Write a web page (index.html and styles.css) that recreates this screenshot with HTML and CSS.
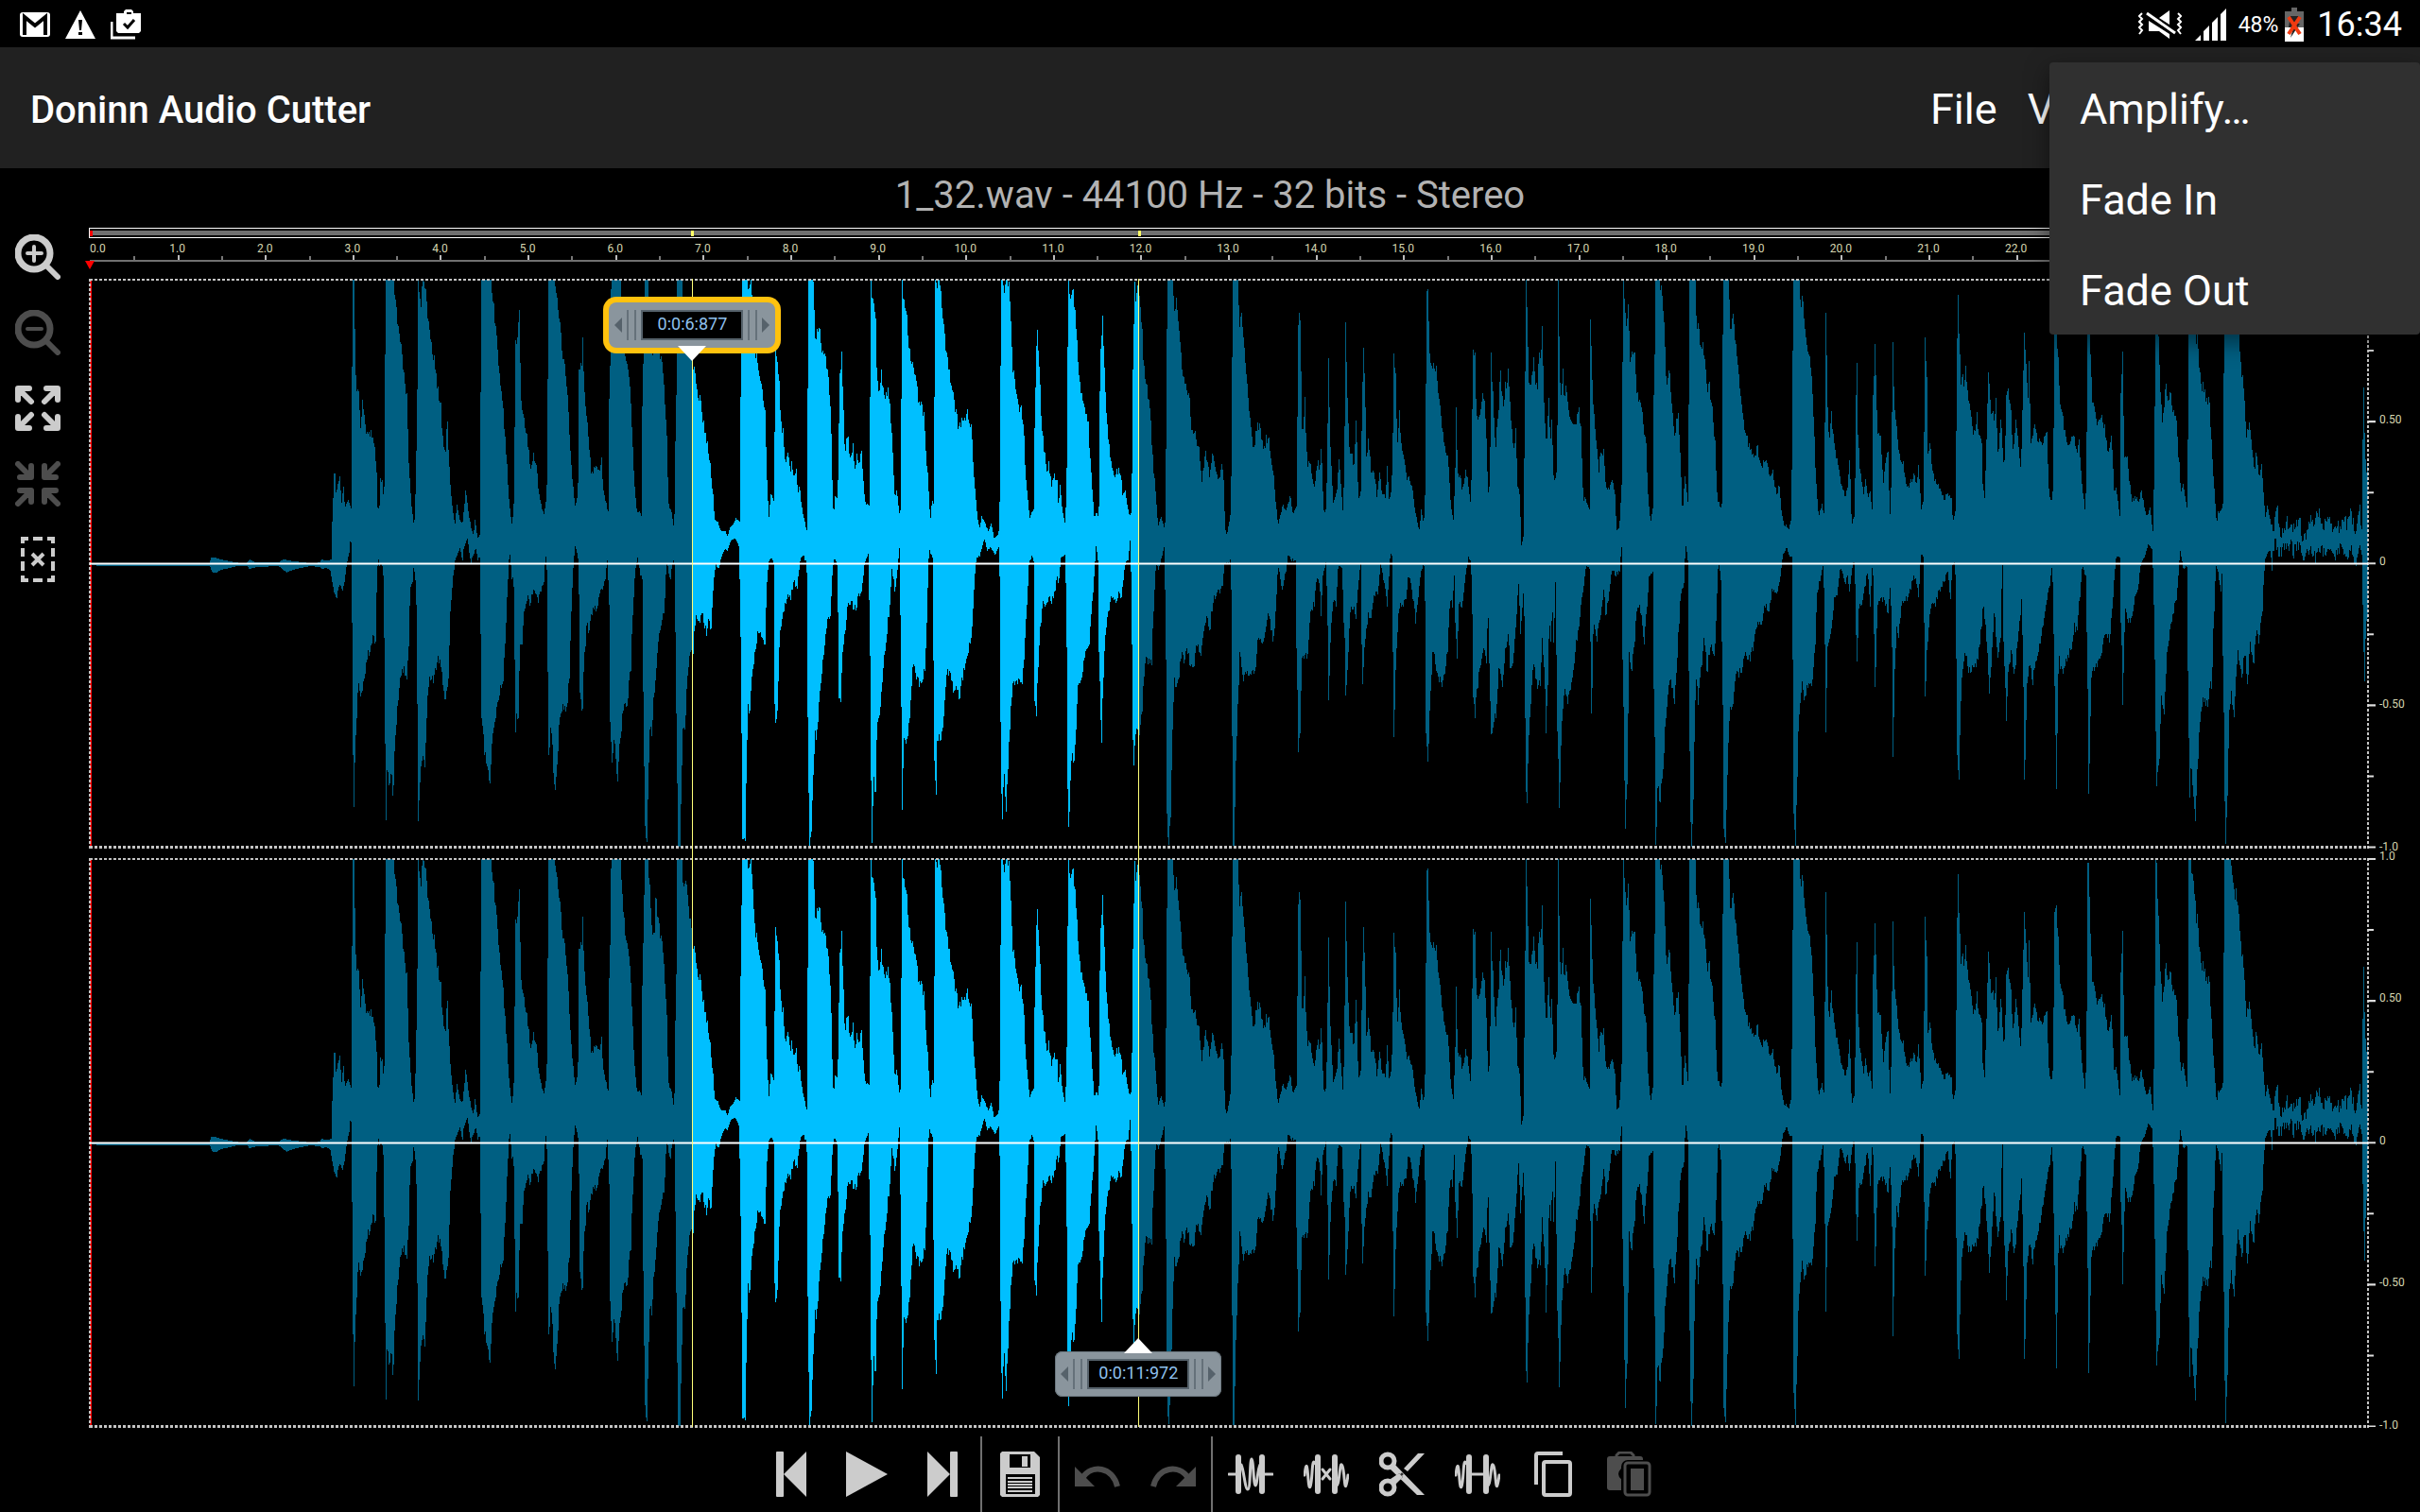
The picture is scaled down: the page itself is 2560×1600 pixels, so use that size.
FILE: index.html
```
<!DOCTYPE html>
<html lang="en">
<head>
    <meta charset="UTF-8">
    <meta name="viewport" content="width=device-width, initial-scale=1.0">
    <title>Doninn Audio Cutter</title>
    <link rel="stylesheet" href="styles.css">
</head>
<body>

    <!-- Status Bar -->
    <div class="status-bar">
        <div class="status-left">
            <svg width="32" height="32" viewBox="0 0 32 32"><rect y="3" width="32" height="26" rx="3" fill="#fff"/><path d="M5 27V8l11 9 11-9v19" fill="none" stroke="#000" stroke-width="4"/></svg>
            <svg width="32" height="32" viewBox="0 0 32 32"><path d="M16 1l16 30H0z" fill="#fff"/><path d="M14 11h4l-1 11h-2zM14 24h4v3h-4z" fill="#000"/></svg>
            <svg width="32" height="32" viewBox="0 0 32 32"><path d="M6 4h8V2l2-2h6l2 2v2h8v19l-2 2H8l-2-2z" fill="#fff"/><path d="M17 3h5v2h-5z" fill="#000"/><path d="M14 15l4 4 7-8" fill="none" stroke="#000" stroke-width="3"/><path d="M1 13v17h25" fill="none" stroke="#fff" stroke-width="3"/></svg>
        </div>
        <div class="status-right">
            <svg width="46" height="32" viewBox="0 0 46 32"><path d="M4 4L1 7l3 3-3 3 3 3-3 3 3 3-3 4M42 4l3 3-3 3 3 3-3 3 3 3-3 3 3 4" fill="none" stroke="#fff" stroke-width="2"/><path d="M33 1v15L22 9zM11 12l22 14v5l-11-8H11z" fill="#fff"/><path d="M9 4l30 21" stroke="#fff" stroke-width="3"/></svg>
            <svg class="signal" width="34" height="34" viewBox="0 0 34 34"><path d="M0 34l6-6v6zM9 34V24l6-6v16zM18 34V15l6-6v25zM27 34V6l6-6v34z" fill="#fff"/></svg>
            <span class="percent">48%</span>
            <svg class="battery" width="20" height="36" viewBox="0 0 20 36"><path d="M7 0h6v4h7v17H0V4h7z" fill="#666"/><path d="M0 21h20v15H0z" fill="#fff"/><path d="M6 9h9l-3 8h4L6 32l3-11H4z" fill="#222"/><path d="M4 10l12 18M16 10L4 28" stroke="#f03a10" stroke-width="4"/></svg>
            <span class="clock">16:34</span>
        </div>
    </div>

    <!-- App Bar -->
    <header class="app-bar">
        <h1>Doninn Audio Cutter</h1>
        <nav class="menu-bar">
            <button>File</button>
            <button>View</button>
        </nav>
        <div class="popup-menu">
            <button>Amplify…</button>
            <button>Fade In</button>
            <button>Fade Out</button>
        </div>
    </header>

    <p class="file-info">1_32.wav - 44100 Hz - 32 bits - Stereo</p>

    <main class="editor">
        <!-- Zoom Tools -->
        <div class="side-bar">
            <button class="tool" aria-label="Zoom in"><svg viewBox="0 0 48 48"><circle cx="20" cy="20" r="17" stroke-width="7"/><path d="M32 32l13 13" stroke-width="6"/><path d="M13 20h15M20 13v15" stroke-width="4"/></svg></button>
            <button class="tool" aria-label="Zoom out" disabled><svg viewBox="0 0 48 48"><circle cx="20" cy="20" r="17" stroke-width="7"/><path d="M32 32l13 13" stroke-width="6"/><path d="M13 20h15" stroke-width="4"/></svg></button>
            <button class="tool" aria-label="Expand"><svg viewBox="0 0 48 48"><path d="M15 3H3v12M4 4l13 13M33 3h12v12M44 4L31 17M15 45H3V33M4 44l13-13M33 45h12V33M44 44L31 31" stroke-width="6"/></svg></button>
            <button class="tool" aria-label="Collapse" disabled><svg viewBox="0 0 48 48"><path d="M17 5v12H5M16 16L3 3M31 5v12h12M32 16L45 3M17 43V31H5M16 32L3 45M31 43V31h12M32 32l13 13" stroke-width="6"/></svg></button>
            <button class="tool" aria-label="Clear selection"><svg class="square-caps" viewBox="0 0 48 48"><path d="M8 7V2h6M19 2h10M34 2h6v5M8 12v9M8 26v10M40 12v9M40 26v10M8 41v5h6M19 46h10M34 46h6v-5" stroke-width="4"/><path d="M18 18l12 12M30 18L18 30" stroke-width="4"/></svg></button>
        </div>

        <!-- Waveform -->
        <div class="wave-area">
            <div class="overview">
                <div class="overview-fill"></div>
                <i class="mark mark-red"></i>
                <i class="mark" style="left: 26.4%"></i>
                <i class="mark" style="left: 46%"></i>
            </div>
            <div class="ruler" id="ruler"><i class="playhead"></i></div>

            <svg class="defs" width="0" height="0">
                <defs>
                    <linearGradient id="levels" gradientUnits="userSpaceOnUse" x1="0" y1="0" x2="2410" y2="0">
                        <stop offset="0.2645" stop-color="#005f82"/>
                        <stop offset="0.2645" stop-color="#00bfff"/>
                        <stop offset="0.4603" stop-color="#00bfff"/>
                        <stop offset="0.4603" stop-color="#005f82"/>
                    </linearGradient>
                    <path id="wave" shape-rendering="crispEdges"/>
                    <g id="frame" fill="none" stroke="#c4c4c4" stroke-width="2" shape-rendering="crispEdges">
                        <path d="M1 0V602" stroke="#f00"/>
                        <path d="M0 1H2410M0 601H2410M0 0V602M2410 0V602" stroke-dasharray="3 2"/>
                        <path d="M0 301H2410" stroke="#fff" stroke-opacity="0.5" stroke-width="3"/>
                        <path d="M0 301H2410" stroke="#fff" stroke-width="1"/>
                    </g>
                    <path id="ticks" d="M0 1h8M0 76h6M0 151h8M0 226h6M0 301h8M0 376h6M0 451h8M0 526h6M0 601h8" stroke="#ddd" stroke-width="2"/>
                </defs>
            </svg>

            <div class="tracks">
                <div class="track">
                    <svg class="plot" viewBox="0 0 2410 602" preserveAspectRatio="none"><use href="#wave" fill="url(#levels)"/><use href="#frame"/></svg>
                    <svg class="ticks" viewBox="0 0 8 602" preserveAspectRatio="none"><use href="#ticks"/></svg>
                    <div class="scale"><span>1.0</span><span>0.50</span><span>0</span><span>-0.50</span><span>-1.0</span></div>
                </div>
                <div class="track">
                    <svg class="plot" viewBox="0 0 2410 602" preserveAspectRatio="none"><use href="#wave" fill="url(#levels)"/><use href="#frame"/></svg>
                    <svg class="ticks" viewBox="0 0 8 602" preserveAspectRatio="none"><use href="#ticks"/></svg>
                    <div class="scale"><span>1.0</span><span>0.50</span><span>0</span><span>-0.50</span><span>-1.0</span></div>
                </div>

                <!-- Selection Handles -->
                <div class="overlay">
                    <div class="cursor" style="left: 26.45%">
                        <button class="handle handle-start active"><i class="arrow-left"></i><i class="grip"></i><span>0:0:6:877</span><i class="grip"></i><i class="arrow-right"></i></button>
                    </div>
                    <div class="cursor" style="left: 46.03%">
                        <button class="handle handle-end"><i class="arrow-left"></i><i class="grip"></i><span>0:0:11:972</span><i class="grip"></i><i class="arrow-right"></i></button>
                    </div>
                </div>
            </div>
        </div>
    </main>

    <!-- Bottom Toolbar -->
    <footer class="toolbar">
        <button class="tool" aria-label="To start"><svg class="solid" viewBox="0 0 48 48"><rect x="8" width="8" height="48" rx="1"/><path d="M40 0v48L16 24z"/></svg></button>
        <button class="tool" aria-label="Play"><svg class="solid" viewBox="0 0 48 48"><path d="M2 0l44 24L2 48z"/></svg></button>
        <button class="tool" aria-label="To end"><svg class="solid" viewBox="0 0 48 48"><rect x="32" width="8" height="48" rx="1"/><path d="M8 0v48l24-24z"/></svg></button>
        <div class="divider"></div>
        <button class="tool" aria-label="Save"><svg class="solid" viewBox="0 0 48 48"><path d="M5 0h34l6 6v40l-2 2H5l-2-2V2z"/><path d="M13 3h22v14H13zM9 24h31v21H9z" fill="#000"/><path d="M26 5h6v11h-6zM11 27h26v2H11zM11 31h26v2H11zM11 34h26v2H11zM11 37h26v2H11zM11 41h26v2H11z"/></svg></button>
        <div class="divider"></div>
        <button class="tool" aria-label="Undo" disabled><svg class="square-caps" viewBox="0 0 48 48"><path d="M8 28C18 13 40 16 45 37" stroke-width="6"/><path class="solid" d="M0 16v21h21z"/></svg></button>
        <button class="tool" aria-label="Redo" disabled><svg class="square-caps" viewBox="0 0 48 48"><path d="M40 28C30 13 8 16 3 37" stroke-width="6"/><path class="solid" d="M48 16v21H27z"/></svg></button>
        <div class="divider"></div>
        <button class="tool" aria-label="Trim"><svg viewBox="0 0 48 48"><path d="M11 6v36M36 6v36" stroke-width="6"/><path d="M1 24h8M38 24h9" stroke-width="3"/><path d="M14 14C17 20 18 40 21 40S23 8 25 8s2 28 4 28 2-16 5-22" stroke-width="3"/></svg></button>
        <button class="tool" aria-label="Delete selection"><svg viewBox="0 0 48 48"><path d="M15 6v36M33 6v36" stroke-width="6"/><path d="M1 25C3 8 4 16 5 30S8 38 9 22 11 12 13 13M47 25C45 40 44 40 43 28S40 10 39 16 37 36 35 36" stroke-width="3"/><path d="M20 19l8 10M28 19l-8 10" stroke-width="3"/></svg></button>
        <button class="tool" aria-label="Cut"><svg class="square-caps" viewBox="0 0 48 48"><circle cx="9" cy="10" r="7" stroke-width="5"/><circle cx="9" cy="38" r="7" stroke-width="5"/><path class="solid" d="M15 12l33 34h-8L12 19zM14 36l11-9-4-4-9 8zM26 18L41 2h7L30 21z"/><path class="solid" d="M12 29l9-6 4 4-9 9z"/><circle cx="24" cy="24" r="1" stroke="#000"/></svg></button>
        <button class="tool" aria-label="Silence"><svg viewBox="0 0 48 48"><path d="M15 6v36M33 6v36" stroke-width="6"/><path d="M1 25C3 8 4 16 5 30S8 38 9 22 11 12 13 13M47 25C45 40 44 40 43 28S40 10 39 16 37 36 35 36M17 24h14" stroke-width="3"/></svg></button>
        <button class="tool" aria-label="Copy"><svg class="square-caps" viewBox="0 0 48 48"><path d="M6 35V4q0-2 2-2h26" stroke-width="4"/><rect x="14" y="11" width="28" height="35" rx="2" stroke-width="4"/></svg></button>
        <button class="tool" aria-label="Paste" disabled><svg class="square-caps" viewBox="0 0 48 48"><path d="M11 7V4l3-3h12l3 3v3" stroke-width="3"/><rect class="solid" x="1" y="5" width="38" height="36" rx="3"/><rect x="19" y="12" width="27" height="36" rx="4" stroke="#000" stroke-width="6"/><path d="M17 19q-5 5 0 9" stroke="#000" stroke-width="3"/><rect x="20" y="12" width="26" height="34" rx="3" stroke-width="3" fill="#000"/><rect class="solid" x="26" y="18" width="14" height="23"/></svg></button>
    </footer>

    <script src="wave.js"></script>
</body>
</html>
```

FILE: styles.css
```
/* Global Styles */
* {
    margin: 0;
    padding: 0;
    box-sizing: border-box;
}

body {
    background: #000;
    color: #fff;
    font-family: Roboto, sans-serif;
    min-height: 100vh;
    display: flex;
    flex-direction: column;
    overflow: hidden;
}

button {
    background: none;
    border: none;
    color: inherit;
    font: inherit;
    cursor: pointer;
}

/* Status Bar */
.status-bar {
    height: 50px;
    padding: 2px 19px 0 21px;
    display: flex;
    justify-content: space-between;
    align-items: center;
}

.status-left,
.status-right {
    display: flex;
    align-items: center;
}

.status-left {
    gap: 16px;
}

.signal {
    margin: 0 12px 0 14px;
}

.percent {
    font-size: 23px;
    margin-right: 7px;
}

.battery {
    margin-right: 14px;
}

.clock {
    font-size: 36px;
    line-height: 48px;
}

/* App Bar */
.app-bar {
    position: relative;
    height: 128px;
    padding: 4px 0 0 32px;
    background: #212121;
    display: flex;
    justify-content: space-between;
    align-items: center;
}

.app-bar h1 {
    font-size: 40px;
    font-weight: 500;
}

.menu-bar {
    display: flex;
    width: 534px;
    font-size: 45px;
}

.menu-bar button {
    padding: 0 16px 2px;
}

.popup-menu {
    position: absolute;
    top: 16px;
    right: 0;
    z-index: 10;
    width: 392px;
    background: #303030;
    border-radius: 4px;
    box-shadow: 0 8px 24px rgba(0, 0, 0, 0.5);
    font-size: 45px;
}

.popup-menu button {
    display: block;
    width: 100%;
    height: 96px;
    padding: 2px 0 0 32px;
    text-align: left;
}

/* File Info */
.file-info {
    height: 54px;
    line-height: 58px;
    font-size: 40px;
    text-align: center;
    color: #b2b2b2;
}

/* Editor */
.editor {
    flex: 1;
    display: flex;
}

.side-bar {
    width: 80px;
    margin-right: 14px;
}

/* Icon Buttons */
.tool {
    display: flex;
    justify-content: center;
    align-items: center;
    width: 80px;
    height: 80px;
    color: #ccc;
}

.tool:disabled {
    color: #4d4d4d;
}

.tool svg {
    width: 48px;
    height: 48px;
    fill: none;
    stroke: currentColor;
    stroke-linecap: round;
    stroke-linejoin: round;
}

.tool .square-caps {
    stroke-linecap: butt;
    stroke-linejoin: miter;
}

.tool .solid {
    fill: currentColor;
    stroke: none;
}

/* Waveform */
.wave-area {
    flex: 1;
    display: flex;
    flex-direction: column;
    padding-top: 9px;
}

.overview {
    position: relative;
    height: 11px;
    margin-right: 55px;
    padding: 2px 0;
    border: 1px solid #fff;
    border-right: none;
}

.overview-fill {
    height: 100%;
    background: #707070;
}

.mark {
    position: absolute;
    top: 2px;
    width: 3px;
    height: 6px;
    background: #ffff66;
}

.mark-red {
    left: 0;
    background: #f00;
}

.ruler {
    position: relative;
    height: 25px;
    margin: 0 55px 0 1px;
    border-bottom: 2px solid #707070;
    font-size: 12px;
    line-height: 22px;
    color: #d6d6b0;
}

.ruler span {
    position: absolute;
    transform: translateX(-50%);
}

.ruler .origin {
    transform: none;
}

.ruler .tick {
    position: absolute;
    bottom: 0;
    width: 2px;
    height: 4px;
    background: #777;
}

.ruler .major {
    height: 5px;
    background: #bbb;
}

.playhead {
    position: absolute;
    top: 24px;
    left: -5px;
    border: 5px solid transparent;
    border-top: 9px solid #f00;
    border-bottom: none;
}

.defs {
    position: absolute;
}

.tracks {
    position: relative;
    flex: 1;
    display: flex;
    flex-direction: column;
    gap: 10px;
    padding: 18px 0 10px 1px;
}

.track {
    flex: 1;
    min-height: 0;
    display: flex;
}

.plot {
    flex: 1;
    width: 0;
    height: 100%;
    overflow: visible;
}

.ticks {
    width: 8px;
    height: 100%;
}

.scale {
    width: 47px;
    margin: -8px 0 -4px;
    padding-left: 4px;
    display: flex;
    flex-direction: column;
    justify-content: space-between;
    font-size: 12px;
    line-height: 12px;
    color: #d6d6b0;
}

/* Selection Handles */
.overlay {
    position: absolute;
    top: 18px;
    bottom: 10px;
    left: 1px;
    right: 55px;
}

.cursor {
    position: absolute;
    top: 0;
    bottom: 0;
    width: 1px;
    background: #ffff78;
}

.handle {
    position: absolute;
    left: -88px;
    width: 176px;
    height: 48px;
    display: flex;
    justify-content: space-between;
    align-items: center;
    padding: 0 6px;
    background: #8a959d;
    border-radius: 8px;
    box-shadow: inset 0 0 0 1px #6d7981;
}

.handle-start {
    top: 25px;
}

.handle-end {
    bottom: 32px;
}

.handle.active {
    box-shadow: 0 0 0 6px #ffc20e;
}

.handle span {
    width: 108px;
    height: 32px;
    background: #000;
    border: 2px solid #56626b;
    font-size: 18px;
    line-height: 25px;
    color: #8fc1ee;
}

.handle::after {
    content: "";
    position: absolute;
    left: 73px;
    border: 15px solid transparent;
}

.handle-start::after {
    top: 46px;
    border-top: 16px solid #fff;
    border-bottom: none;
}

.handle-end::after {
    bottom: 46px;
    border-bottom: 16px solid #fff;
    border-top: none;
}

.grip {
    width: 10px;
    height: 32px;
    border: solid #65717a;
    border-width: 0 2px;
}

.arrow-left,
.arrow-right {
    border: 8px solid transparent;
}

.arrow-left {
    border-left: none;
    border-right-color: #56626b;
}

.arrow-right {
    border-right: none;
    border-left-color: #56626b;
}

/* Bottom Toolbar */
.toolbar {
    display: flex;
    justify-content: center;
    height: 80px;
}

.divider {
    width: 2px;
    background: #707070;
}
```

FILE: wave.js
```
// Each block: start position in px, units per px, then "x,level" pairs.
// Levels run from 15 (+1.0) over 788 (0) to 1560 (-1.0).
const upper = [
    [0, 1, "0,788 127,788 128,771 133,773 140,778 155,786 166,787 169,778 175,785 200,786 205,776 212,781 232,787 243,786"],
    [245, 2.119, "0,778 18,780 24,775 25,675 28,545 30,542 33,598 38,570 42,550 45,630 49,580 53,635 60,615 67,640 68,350 71,15 73,15 75,150 78,300 83,320 88,420 93,342 98,410 105,440 112,440 120,470 123,540 126,635 130,640 133,555 136,560 138,610 141,580 142,335 145,15 162,15 166,70 172,140 178,190 184,270 192,330 196,520 203,640 208,690 211,600 214,480 215,335 217,15 220,60 224,90 227,15 234,40 238,120 246,185 254,240 260,310 268,360 272,440 278,500 282,400 285,480 290,580 296,660 300,680 304,628 310,670 316,680 320,640 324,590 330,650 337,700 341,710 345,670 350,720 355,710 357,335 360,15 380,15 386,80 393,180 400,270 408,380 415,500 421,620 427,680 431,650 433,440 436,180 439,175 443,98 447,300 450,380 460,435 466,500 470,530 476,490 482,520 487,590 492,625 499,655 503,620 505,625 507,340 510,15 522,15 528,70 535,130 540,220 546,260 553,330 558,480 564,580 569,635 575,600 577,440 578,260 584,255 586,172 589,320 596,405 602,500 606,550 611,525 617,525 624,540 628,505 632,590 638,625 644,650 646,340 650,40 652,15 670,15 674,110 680,200 685,245 692,310 698,470 703,600 708,650 712,645 718,660 720,360 725,15 732,15 735,70 742,220 748,215 750,120 754,180 762,230 768,300 774,440 779,640 784,640 791,700 793,500 796,330 798,15 808,15 811,90 818,90 832,230 836,265 842,320 850,345 858,420 866,460 872,520 878,600 882,670 888,675 896,700 905,700 911,715 916,690 922,685 929,665 934,670 939,675 940,335 943,15 955,15 958,60 964,15 966,80 972,200 978,250 986,310 994,370 998,520 1003,670 1007,600 1012,610 1016,635 1017,430 1019,200 1022,290 1023,240 1027,290 1030,400 1036,440 1040,510 1046,490 1051,540 1055,510 1060,560 1064,530 1068,600 1072,580 1078,640 1086,690 1089,700 1090,335 1093,15 1100,15 1101,50 1103,30 1106,110 1108,200 1112,150 1117,150 1120,200 1130,230 1136,280 1142,370 1145,560 1148,655 1152,605 1157,620 1160,430 1162,270 1164,270 1167,215 1170,370 1174,480 1180,445 1186,500 1192,460 1196,530 1201,490 1206,530 1210,480 1214,550 1219,620 1228,630 1230,335 1232,15 1235,80 1238,80 1242,120 1246,290 1250,330 1255,262 1260,320 1264,340 1270,315 1275,370 1279,440 1285,600 1290,590 1296,650 1299,640 1300,340 1302,15 1304,70 1312,110 1317,200 1325,240 1333,290 1340,350 1350,375 1355,480 1360,560 1365,670 1369,620 1373,630 1375,335 1377,15 1380,40 1384,15 1390,70 1398,180 1406,260 1415,320 1422,370 1429,430 1436,400 1442,390 1448,378 1457,410 1461,520 1466,600 1471,670 1476,690 1480,660 1488,680 1495,700 1502,680 1508,720 1516,710 1520,690 1522,340 1524,15"],
    [965, 2.119, "0,15 5,50 9,15 15,20 19,100 24,270 27,262 34,340 40,380 44,370 49,440 54,560 62,665 66,650 71,640 73,440 77,200 80,152 85,300 90,430 97,500 101,545 105,517 111,580 117,545 123,560 127,640 130,575 135,640 142,685 145,540 147,210 149,15 154,80 159,40 163,90 168,180 175,300 184,355 193,400 200,540 207,665 212,650 217,660 219,330 221,220 226,113 229,255 236,410 243,500 252,550 262,530 267,560 271,605 276,590 282,640 289,665 291,570 294,260 297,20 300,75 305,30 310,90 314,150 318,250 325,300 332,370 339,520 345,600 350,685 357,662 363,690 367,670 368,475 370,150 372,15 383,15 387,110 391,65 396,140 402,230 410,300 419,325 425,425 433,430 441,470 448,570 456,482 466,555 472,490 480,540 488,555 493,525 497,560 500,690 504,712 509,680 513,650 514,550 516,236 518,15 529,15 532,145 537,112 543,200 550,300 556,390 563,475 573,415 579,420 586,480 592,450 598,445 604,520 610,560 615,640 619,685 624,655 630,628 636,645 641,625 646,605 652,650 660,640 662,425 664,160 666,105 668,125 671,265 673,435 679,345 684,515 690,515 700,580 708,515 713,530 716,475 721,648 727,640 730,420 732,230 736,470 743,625 751,590 755,505 760,575 765,668 768,420 771,130 773,280 778,470 784,490 789,520 794,398 799,618 804,600 806,430 810,205 813,270 817,510 822,447 828,540 834,540 841,610 846,540 852,600 860,610 864,522 868,620 873,595 876,450 879,217 882,270 886,468 891,375 895,470 903,520 908,560 913,550 920,590 926,640 935,700 940,640 945,680 948,640 950,350 952,60 955,40 958,215 962,250 968,242 974,260 980,340 986,420 992,475 1000,500 1005,615 1012,672 1016,540 1018,362 1022,550 1027,548 1032,590 1039,540 1044,560 1050,625 1053,560 1054,375 1056,220 1060,212 1064,395 1070,390 1077,325 1082,345 1086,460 1090,600 1094,550 1096,212 1100,320 1106,470 1112,400 1117,262 1124,360 1129,292 1132,320 1135,262 1140,380 1147,490 1151,420 1156,580 1161,600 1164,740 1169,715 1172,350 1175,15 1177,90 1181,305 1187,290 1192,225 1196,300 1200,320 1204,212 1208,240 1211,140 1215,350 1221,460 1226,342 1229,475 1232,395 1237,560 1243,540 1245,420 1247,15 1249,170 1252,350 1257,257 1261,350 1264,305 1270,380 1280,410 1284,424 1290,380 1293,362 1298,420 1303,620 1307,608 1316,640 1318,680 1320,123 1324,320 1330,440 1338,540 1342,485 1349,476 1354,580 1361,590 1368,560 1374,600 1378,698 1384,690 1389,580 1392,240 1394,15 1398,130 1402,120 1404,82 1408,240 1412,225 1418,212 1423,325 1431,350 1438,410 1444,460 1448,600 1454,680 1460,630 1462,330 1465,15 1474,15 1480,60 1484,130 1490,320 1496,262 1502,370 1507,440 1512,400 1517,385 1521,500 1525,640"],
    [1685, 2.119, "0,652 5,550 12,620 14,355 16,15 28,15 32,150 36,145 42,215 46,185 52,260 56,325 60,303 66,360 73,460 78,610 85,637 89,620 91,165 93,15 103,15 107,150 113,107 118,180 126,280 135,390 145,450 153,475 160,500 168,466 176,525 182,508 190,515 196,550 202,537 210,600 217,578 223,660 228,685 232,683 238,697 244,665 246,330 248,15 262,15 266,105 269,58 274,150 280,210 288,255 294,390 299,570 305,665 312,625 318,660 319,405 321,117 323,220 326,400 329,460 333,373 340,460 348,520 356,580 366,610 371,560 375,507 379,685 386,650 388,375 391,242 393,450 400,560 406,600 410,558 415,610 421,592 426,655 428,330 431,190 434,300 437,450 443,440 450,570 456,500 460,484 466,685 469,430 471,185 475,370 480,415 486,500 494,510 500,560 506,588 512,560 519,550 525,570 529,523 535,640 540,620 542,430 543,172 547,280 550,490 555,460 560,540 570,570 578,590 586,615 592,600 602,610 606,675 612,645 613,470 616,175 618,57 620,172 624,300 628,272 631,305 635,250 640,345 648,400 654,440 660,390 664,440 670,460 672,570 677,610 681,450 685,268 690,350 692,400 696,372 699,400 702,338 707,490 714,395 721,540 726,330 730,312 733,345 736,370 741,495 747,395 752,440 758,535 762,370 766,158 770,250 774,345 777,237 780,460 785,440 790,418 796,460 806,465 812,440 817,430 821,590 826,620 830,595 834,158 838,155 842,230 845,325 850,380 857,430 866,470 876,440 884,500 889,450 895,570 903,650 906,430 907,25 911,25 913,170 918,350 924,380 932,410 940,390 947,420 953,480 958,475 962,440 967,590 972,585 980,660 983,325 986,211 990,500 996,497 1002,570 1008,620 1014,605 1022,620 1028,590 1033,620 1040,660 1048,635 1055,710 1058,435 1060,25 1062,25 1066,170 1072,330 1075,420 1083,298 1088,345 1092,322 1100,370 1107,410 1113,515 1118,600 1121,570 1126,605 1132,640 1134,15 1138,15 1144,60 1150,140 1152,195 1153,165 1158,255 1165,320 1167,293 1173,350 1180,335 1185,450 1190,550 1197,682 1201,645 1207,648 1212,625 1213,295 1215,15 1229,15 1234,80 1238,130 1241,95 1247,165 1251,250 1258,310 1263,445 1271,405 1278,500 1283,540 1286,485 1292,560 1298,522 1303,610 1306,665 1311,630 1320,700 1327,680 1333,640 1338,690 1346,715 1354,675 1362,690 1370,680 1377,670 1384,672 1391,725 1400,700 1408,670 1414,690 1421,650 1427,638 1432,690 1440,685 1450,670 1460,690 1470,690 1480,670 1490,685 1497,645 1503,680 1510,700 1518,643 1523,695 1524,510 1527,308 1530,505 1536,540"]
];

const lower = [
    [0, 1, "0,790 7,794 127,795 130,814 134,812 140,805 155,796 166,795 169,803 178,797 200,796 208,812 218,803 232,796 243,797"],
    [245, 2.119, "0,803 12,800 20,808 25,840 28,865 34,884 38,855 42,845 47,862 52,838 57,790 62,760 65,725 67,730 69,950 71,1310 73,1452 76,1290 79,1210 83,1100 88,1150 94,1110 103,1040 110,1030 117,975 121,1000 124,860 127,770 131,795 136,785 140,830 142,1160 145,1488 147,1350 152,1390 157,1355 161,1420 166,1250 172,1160 176,1100 182,1075 192,1095 196,1000 199,865 204,840 207,800 210,820 214,900 216,1170 217,1490 221,1380 226,1310 231,1343 235,1240 240,1120 247,1090 251,1115 256,1070 262,1040 268,1070 272,1120 279,1158 285,1100 289,920 294,840 300,780 306,760 311,745 316,780 320,740 328,720 335,790 340,765 347,745 351,780 355,770 357,980 360,1210 366,1310 372,1340 378,1388 382,1280 388,1220 394,1170 402,1120 408,1110 413,980 418,830 422,750 427,830 431,830 433,1000 435,1248 438,1180 441,1210 446,1010 450,1000 456,910 462,875 468,895 474,865 480,870 486,895 492,865 498,840 502,780 505,750 507,1030 510,1310 514,1230 517,1250 521,1360 525,1405 530,1300 535,1200 541,1170 550,1180 556,1100 560,920 565,790 569,740 573,760 577,790 579,1140 585,1185 590,1030 596,950 600,970 608,920 617,910 624,870 630,860 636,830 641,780 646,900 648,1220 652,1330 656,1260 660,1320 664,1374 669,1280 676,1190 686,1160 693,1080 698,930 703,810 708,770 713,800 716,820 720,830 721,1070 725,1500 729,1548 732,1430 737,1210 741,1250 746,1140 753,1030 762,950 769,920 774,780 779,815 783,830 788,780 792,790 795,1150 800,1560 804,1560 807,1420 811,1220 815,1240 820,1100 827,1030 834,1020 838,945 843,930 848,950 852,920 858,950 863,975 868,940 874,965 879,850 884,790 891,800 897,770 904,750 910,755 918,725 928,720 936,740 939,900 942,1250 945,1540 950,1545 953,1370 956,1170 960,1190 966,1090 973,1020 980,965 988,990 994,1010 998,860 1003,780 1010,775 1015,790 1017,1170 1019,1223 1023,1190 1027,1000 1032,940 1040,895 1046,870 1052,880 1058,840 1067,850 1073,780 1080,765 1088,790 1090,1180 1094,1558 1098,1520 1103,1360 1107,1240 1110,1270 1116,1160 1123,1070 1130,980 1137,925 1142,930 1145,820 1150,770 1157,800 1160,1150 1164,1165 1168,1020 1174,970 1180,900 1187,890 1192,910 1198,915 1205,870 1212,860 1218,790 1226,760 1230,1020 1232,1380 1235,1550 1238,1370 1242,1410 1246,1220 1253,1180 1260,1070 1268,980 1274,900 1279,800 1286,865 1290,820 1296,745 1299,1030 1302,1460 1306,1260 1311,1275 1320,1210 1325,1060 1332,1080 1341,1125 1348,1100 1353,1080 1357,950 1362,750 1370,770 1374,1310 1378,1418 1381,1260 1390,1260 1395,1200 1402,1080 1410,1080 1416,1130 1425,1120 1430,1158 1437,1100 1445,1060 1457,990 1463,860 1468,770 1475,770 1480,750 1486,720 1493,755 1500,745 1510,765 1520,740 1522,1160 1524,1400"],
    [965, 2.119, "1,1472 5,1360 9,1465 13,1350 18,1240 22,1150 27,1105 34,1105 40,1095 46,1118 50,1050 54,940 58,850 61,785 68,765 71,780 73,1160 77,1205 81,1070 86,960 92,890 99,900 105,880 112,895 119,860 124,820 127,840 132,770 142,765 145,980 147,1380 149,1505 152,1440 156,1310 161,1330 166,1240 171,1120 179,1090 186,1040 195,1010 201,920 207,820 211,740 215,770 218,1030 223,1278 227,1100 233,960 240,910 249,870 255,895 261,865 267,880 273,820 278,780 283,780 288,715 291,950 293,1255 296,1338 300,1240 303,1225 309,1255 315,1180 320,1060 325,1045 335,1065 340,920 345,790 350,805 357,775 364,740 368,1050 370,1470 373,1555 378,1480 382,1240 387,1100 391,1125 397,1100 402,1040 409,1050 415,1020 422,1065 430,1070 435,1010 440,1010 446,1040 452,960 457,935 466,970 473,890 480,870 488,870 494,850 499,785 509,790 513,770 514,860 516,1260 518,1558 520,1558 526,1260 530,1120 533,1030 541,1110 549,1070 554,1090 560,1080 568,1070 575,985 585,1000 592,960 597,925 603,970 608,1000 614,920 619,790 624,830 629,860 636,810 641,765 650,780 658,780 661,1020 664,1302 668,1250 673,1040 680,1030 686,1035 692,920 700,900 707,820 712,840 715,930 720,810 726,785 729,900 733,1160 738,950 744,880 749,905 754,790 762,800 767,950 771,1148 776,1030 782,900 788,910 793,940 800,830 804,780 807,1010 809,1118 814,990 820,935 828,930 836,870 843,870 849,790 855,830 864,900 870,770 874,755 877,1030 879,1262 884,1020 890,910 898,900 905,885 911,820 918,850 928,950 934,870 940,800 947,790 949,890 951,1250 955,1326 959,1180 965,1030 972,1060 980,1100 986,1125 993,1090 999,1020 1005,880 1010,905 1014,820 1017,950 1020,1048 1025,880 1031,905 1038,830 1046,770 1051,780 1054,890 1056,1140 1060,1210 1065,1130 1072,1070 1080,1020 1085,1060 1090,930 1093,1060 1096,1253 1102,1220 1108,1200 1114,1070 1122,1115 1129,1020 1135,980 1139,1060 1146,1060 1152,960 1158,835 1162,980 1170,850 1172,1080 1174,1380 1177,1442 1180,1300 1185,1170 1191,1060 1200,1130 1207,1110 1211,990 1216,1070 1220,1250 1224,1100 1227,930 1231,1000 1234,900 1237,1005 1241,830 1244,1200 1250,1454 1254,1250 1260,1130 1268,1170 1276,1110 1285,1030 1292,970 1298,900 1304,850 1310,790 1317,800 1319,1000 1322,1198 1326,940 1333,1000 1341,930 1349,860 1354,930 1360,890 1367,800 1375,820 1384,810 1389,745 1392,1050 1395,1360 1397,1510 1401,1390 1406,1030 1412,1080 1418,1000 1424,900 1430,900 1440,1010 1446,900 1451,815 1459,810 1462,1130 1466,1555 1470,1380 1475,1438 1482,1350 1488,1210 1494,1120 1500,1100 1507,1170 1514,1030 1521,880 1525,850"],
    [1685, 2.119, "0,855 3,840 7,735 12,780 14,1080 17,1440 20,1560 24,1430 28,1160 31,1100 35,1160 42,1070 48,990 55,1080 63,1010 72,1040 76,920 80,780 86,830 90,1160 93,1510 97,1550 101,1350 106,1180 112,1180 120,1090 132,1085 141,1030 151,1055 160,1000 170,950 177,955 184,900 194,920 201,855 214,865 220,820 224,770 233,745 240,770 246,770 247,1050 250,1470 253,1558 257,1370 261,1200 267,1110 273,1160 280,1125 290,1110 297,1010 302,860 311,820 316,790 319,1010 321,1248 325,1010 333,965 340,880 347,870 354,800 365,845 370,820 375,865 381,790 386,780 388,960 391,1055 396,890 402,900 409,850 415,810 421,905 426,770 430,980 432,1125 437,900 446,880 455,900 460,925 465,850 469,960 472,1315 476,1060 480,950 485,990 490,900 498,890 508,870 518,820 525,845 529,880 534,765 540,770 542,950 544,1150 549,1000 556,910 566,905 575,860 585,840 595,810 600,885 605,790 611,780 613,1000 616,1310 620,1374 625,1100 634,1020 642,1085 652,1070 662,1050 670,960 674,890 678,940 682,1000 687,1135 692,1070 699,910 706,1040 712,990 717,770 720,1000 726,1217 731,1070 737,1020 743,1090 752,1000 760,885 763,1050 767,1378 773,1100 778,1065 785,1105 794,1035 805,980 815,900 823,850 829,790 833,1080 838,1402 843,1050 852,1080 862,1045 872,1010 877,960 884,970 890,880 896,790 904,820 907,1050 911,1415 916,1100 927,1060 937,1040 948,980 957,990 965,880 972,765 980,770 983,950 987,1175 992,900 997,940 1004,950 1011,900 1020,860 1028,785 1036,770 1044,735 1053,750 1057,900 1060,1200 1063,1395 1069,1310 1073,1140 1080,1200 1087,1010 1097,940 1108,880 1115,750 1123,800 1131,795 1133,1080 1136,1425 1140,1330 1145,1420 1150,1490 1155,1320 1161,1210 1169,1150 1177,1180 1182,1110 1186,1130 1191,920 1196,790 1201,810 1206,865 1210,790 1212,1040 1215,1410 1217,1553 1221,1420 1226,1180 1230,1130 1236,1208 1244,1020 1254,1100 1260,1030 1267,1117 1272,1000 1280,1060 1286,970 1292,1000 1299,920 1303,820 1307,770 1316,750 1321,790 1330,720 1336,770 1345,745 1352,750 1362,735 1370,755 1380,740 1392,780 1400,750 1408,740 1418,778 1426,735 1435,760 1450,745 1460,770 1468,745 1478,745 1487,770 1497,740 1508,790 1514,760 1523,745 1525,900 1528,1110 1531,980 1536,930"]
];

const WIDTH = 2410;

function readPoints(blocks) {
    const points = [];
    for (const [start, units, text] of blocks) {
        for (const pair of text.split(" ")) {
            const [x, level] = pair.split(",").map(Number);
            points.push([start + x / units, 1 + (level - 15) / 2.575]);
        }
    }
    return points;
}

// Repeatable noise between -1 and 1
function noise(n) {
    const v = Math.sin(n * 127.1) * 43758.5453;
    return (v - Math.floor(v)) * 2 - 1;
}

// One level per pixel column; pick() keeps the outermost value of a column
function columns(points, pick, seed) {
    const out = [];
    let i = 0;
    for (let x = 0; x < WIDTH; x++) {
        const mid = x + 0.5;
        while (i < points.length - 2 && points[i + 1][0] < mid) i++;
        const [x0, y0] = points[i];
        const [x1, y1] = points[i + 1];
        let y = y0 + (y1 - y0) * Math.min(1, (mid - x0) / (x1 - x0));
        const size = x > 2305 ? 8 : Math.min(6, Math.abs(y - 272) / 16);
        if (x > 280 && y > 2) y += noise(x + seed) * size;
        for (let k = Math.max(0, i - 2); k < points.length && points[k][0] < x + 1; k++) {
            if (points[k][0] >= x) y = pick(y, points[k][1]);
        }
        out.push(Math.max(1, Math.min(601, Math.round(y))));
    }
    return out;
}

function drawWave() {
    const top = columns(readPoints(upper), Math.min, 0);
    const bottom = columns(readPoints(lower), Math.max, 5000);
    let d = "";
    for (let x = 0; x < WIDTH; x++) {
        d += `M${x} ${top[x]}h1V${Math.max(bottom[x], top[x] + 1)}h-1z`;
    }
    document.getElementById("wave").setAttribute("d", d);
}

function drawRuler() {
    const ruler = document.getElementById("ruler");
    const seconds = 26.02;
    for (let half = 0; half <= 52; half++) {
        const left = (half / 2 / seconds) * 100 + "%";
        if (half % 2 === 0) {
            const label = document.createElement("span");
            label.textContent = (half / 2).toFixed(1);
            label.style.left = left;
            if (half === 0) label.className = "origin";
            ruler.appendChild(label);
        }
        if (half > 0) {
            const tick = document.createElement("i");
            tick.className = half % 2 === 0 ? "tick major" : "tick";
            tick.style.left = left;
            ruler.appendChild(tick);
        }
    }
}

drawWave();
drawRuler();
```
